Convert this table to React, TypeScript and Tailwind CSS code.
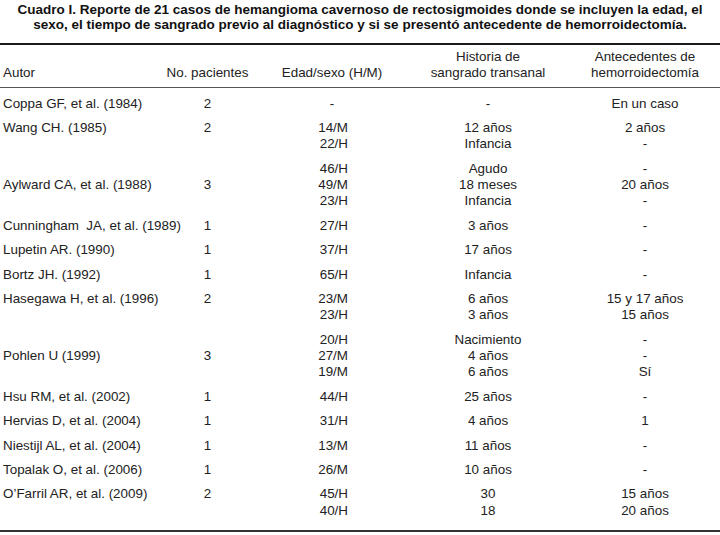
type Row = {
  autor: string;
  n: string;
  at: number;
  edad: string[];
  hist: string[];
  ante: string[];
};

const rows: Row[] = [
  { autor: "Coppa GF, et al. (1984)", n: "2", at: 0, edad: ["-"], hist: ["-"], ante: ["En un caso"] },
  { autor: "Wang CH. (1985)", n: "2", at: 0, edad: ["14/M", "22/H"], hist: ["12 años", "Infancia"], ante: ["2 años", "-"] },
  {
    autor: "Aylward CA, et al. (1988)",
    n: "3",
    at: 1,
    edad: ["46/H", "49/M", "23/H"],
    hist: ["Agudo", "18 meses", "Infancia"],
    ante: ["-", "20 años", "-"],
  },
  { autor: "Cunningham  JA, et al. (1989)", n: "1", at: 0, edad: ["27/H"], hist: ["3 años"], ante: ["-"] },
  { autor: "Lupetin AR. (1990)", n: "1", at: 0, edad: ["37/H"], hist: ["17 años"], ante: ["-"] },
  { autor: "Bortz JH. (1992)", n: "1", at: 0, edad: ["65/H"], hist: ["Infancia"], ante: ["-"] },
  {
    autor: "Hasegawa H, et al. (1996)",
    n: "2",
    at: 0,
    edad: ["23/M", "23/H"],
    hist: ["6 años", "3 años"],
    ante: ["15 y 17 años", "15 años"],
  },
  {
    autor: "Pohlen U (1999)",
    n: "3",
    at: 1,
    edad: ["20/H", "27/M", "19/M"],
    hist: ["Nacimiento", "4 años", "6 años"],
    ante: ["-", "-", "Sí"],
  },
  { autor: "Hsu RM, et al. (2002)", n: "1", at: 0, edad: ["44/H"], hist: ["25 años"], ante: ["-"] },
  { autor: "Hervias D, et al. (2004)", n: "1", at: 0, edad: ["31/H"], hist: ["4 años"], ante: ["1"] },
  { autor: "Niestijl AL, et al. (2004)", n: "1", at: 0, edad: ["13/M"], hist: ["11 años"], ante: ["-"] },
  { autor: "Topalak O, et al. (2006)", n: "1", at: 0, edad: ["26/M"], hist: ["10 años"], ante: ["-"] },
  {
    autor: "O’Farril AR, et al. (2009)",
    n: "2",
    at: 0,
    edad: ["45/H", "40/H"],
    hist: ["30", "18"],
    ante: ["15 años", "20 años"],
  },
];

const grid = "grid grid-cols-[165px_85px_172px_148px_150px]";

function Lines({ items }: { items: string[] }) {
  return (
    <>
      {items.map((t, i) => (
        <div key={i} className="whitespace-pre">
          {t}
        </div>
      ))}
    </>
  );
}

export default function App() {
  return (
    <div className="w-[720px] h-[535px] bg-white font-['Liberation_Sans',Arial,sans-serif] text-[13.4px] text-[#222]">
      <h1 className="text-center font-bold text-[13.5px] leading-[15.7px] pt-[1.5px] text-[#111] whitespace-nowrap">
        Cuadro I. Reporte de 21 casos de hemangioma cavernoso de rectosigmoides donde se incluyen la edad, el
        <br />
        sexo, el tiempo de sangrado previo al diagnóstico y si se presentó antecedente de hemorroidectomía.
      </h1>

      <div className="mt-[10px] border-t-2 border-[#1a1a1a]">
        <div className={`${grid} items-end leading-[16px] pt-[4.3px] pb-[5.3px] border-b border-[#555]`}>
          <div className="pl-[3px]">Autor</div>
          <div className="text-center">No. pacientes</div>
          <div className="text-center pr-[8px]">Edad/sexo (H/M)</div>
          <div className="text-center pr-[16px]">
            Historia de
            <br />
            sangrado transanal
          </div>
          <div className="text-center">
            Antecedentes de
            <br />
            hemorroidectomía
          </div>
        </div>

        <div className="pt-[4px] pb-[7px] border-b-2 border-[#333]">
          {rows.map((r) => (
            <div key={r.autor} className={`${grid} leading-[16.3px] py-[4.07px]`}>
              <div className="pl-[3px] whitespace-pre" style={{ paddingTop: r.at * 16.3 }}>
                {r.autor}
              </div>
              <div className="text-center" style={{ paddingTop: r.at * 16.3 }}>
                {r.n}
              </div>
              <div className={r.edad[0] === "-" ? "text-center pr-[8px]" : "text-right pr-[74px]"}>
                <Lines items={r.edad} />
              </div>
              <div className="text-center pr-[16px]">
                <Lines items={r.hist} />
              </div>
              <div className="text-center">
                <Lines items={r.ante} />
              </div>
            </div>
          ))}
        </div>
      </div>
    </div>
  );
}
